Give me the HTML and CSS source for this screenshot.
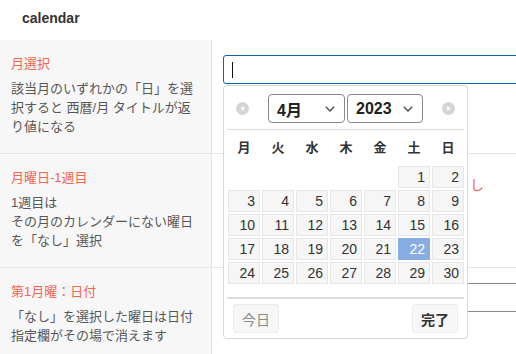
FILE: index.html
```html
<!DOCTYPE html>
<html lang="ja">
<head>
    <meta charset="UTF-8">
    <title>calendar</title>
    <link rel="stylesheet" href="styles.css">
</head>
<body>
    <div class="page-head">calendar</div>

    <div class="form-rows">
        <div class="form-row">
            <div class="row-label">
                <div class="label-title">月選択</div>
                <p class="label-desc">該当月のいずれかの「日」を選<br>択すると 西暦/月 タイトルが返<br>り値になる</p>
            </div>
            <div class="row-field">
                <div class="date-box">
                    <div class="date-input is-focused"><span class="caret"></span></div>

                    <div class="picker">
                        <div class="picker-head">
                            <svg class="nav-btn" width="13" height="13" viewBox="0 0 13 13">
                                <circle cx="6.5" cy="6.5" r="6.5" fill="#d5d5d5"/>
                                <polygon points="7.8,3.8 4.6,6.5 7.8,9.2" fill="#fff"/>
                            </svg>
                            <div class="picker-selects">
                                <div class="fake-select month-select">
                                    <span>4月</span>
                                    <svg width="10" height="6" viewBox="0 0 10 6"><polyline points="0.8,0.8 5,5 9.2,0.8" fill="none" stroke="#444" stroke-width="1.3"/></svg>
                                </div>
                                <div class="fake-select year-select">
                                    <span>2023</span>
                                    <svg width="10" height="6" viewBox="0 0 10 6"><polyline points="0.8,0.8 5,5 9.2,0.8" fill="none" stroke="#444" stroke-width="1.3"/></svg>
                                </div>
                            </div>
                            <svg class="nav-btn" width="13" height="13" viewBox="0 0 13 13">
                                <circle cx="6.5" cy="6.5" r="6.5" fill="#d5d5d5"/>
                                <polygon points="5.2,3.8 8.4,6.5 5.2,9.2" fill="#fff"/>
                            </svg>
                        </div>

                        <div class="week-row">
                            <span>月</span><span>火</span><span>水</span><span>木</span><span>金</span><span>土</span><span>日</span>
                        </div>

                        <div class="day-grid">
                            <span class="day-empty"></span><span class="day-empty"></span><span class="day-empty"></span><span class="day-empty"></span><span class="day-empty"></span>
                            <span class="day">1</span><span class="day">2</span>
                            <span class="day">3</span><span class="day">4</span><span class="day">5</span><span class="day">6</span><span class="day">7</span><span class="day">8</span><span class="day">9</span>
                            <span class="day">10</span><span class="day">11</span><span class="day">12</span><span class="day">13</span><span class="day">14</span><span class="day">15</span><span class="day">16</span>
                            <span class="day">17</span><span class="day">18</span><span class="day">19</span><span class="day">20</span><span class="day">21</span><span class="day is-selected">22</span><span class="day">23</span>
                            <span class="day">24</span><span class="day">25</span><span class="day">26</span><span class="day">27</span><span class="day">28</span><span class="day">29</span><span class="day">30</span>
                        </div>

                        <div class="picker-foot">
                            <button class="foot-btn today-btn">今日</button>
                            <button class="foot-btn done-btn">完了</button>
                        </div>
                    </div>
                </div>
            </div>
        </div>

        <div class="form-row">
            <div class="row-label">
                <div class="label-title">月曜日-1週目</div>
                <p class="label-desc">1週目は<br>その月のカレンダーにない曜日<br>を「なし」選択</p>
            </div>
            <div class="row-field">
                <div class="none-line">し</div>
            </div>
        </div>

        <div class="form-row">
            <div class="row-label">
                <div class="label-title">第1月曜：日付</div>
                <p class="label-desc">「なし」を選択した曜日は日付<br>指定欄がその場で消えます</p>
            </div>
            <div class="row-field">
                <div class="date-box">
                    <div class="date-input"></div>
                </div>
            </div>
        </div>
    </div>
</body>
</html>
```

FILE: styles.css
```css
:root {
    --label-bg: #f7f7f8;
    --line: #e5e5e5;
    --accent: #f2664f;
    --text-main: #333333;
    --text-sub: #575757;
    --focus: #1363a7;
}
* {
    margin: 0;
    padding: 0;
    box-sizing: border-box;
}
html, body {
    overflow: hidden;
}
body {
    font-family: "Liberation Sans", "Noto Sans CJK JP", sans-serif;
    color: var(--text-main);
    background-color: #fff;
}
.page-head {
    height: 40px;
    padding: 8px 22px 0;
    font-size: 14px;
    line-height: 20px;
    font-weight: 700;
}
.form-row {
    display: grid;
    grid-template-columns: 212px 1fr;
    border-bottom: 1px solid var(--line);
}
.row-label {
    background-color: var(--label-bg);
    border-right: 1px solid var(--line);
    padding: 14px 11px 17px;
}
.label-title {
    color: var(--accent);
    font-size: 13px;
    line-height: 20px;
    margin-bottom: 5px;
}
.label-desc {
    color: var(--text-sub);
    font-size: 13px;
    line-height: 19px;
}
.row-field {
    padding: 15px 0 0 11px;
}
.date-box {
    position: relative;
    width: calc(100% + 16px);
}
.date-input {
    height: 29px;
    display: flex;
    align-items: center;
    padding-left: 8px;
    background-color: #fff;
    border: 1px solid #8a8a8a;
    border-radius: 3px;
}
.date-input.is-focused {
    border-color: var(--focus);
}
.caret {
    width: 1px;
    height: 16px;
    background-color: #111;
}
.none-line {
    height: 29px;
    display: flex;
    align-items: center;
    padding-left: 247px;
    color: var(--accent);
    font-size: 14px;
}

/* date picker popup */
.picker {
    position: absolute;
    top: calc(100% + 1px);
    left: 0;
    width: 245px;
    background-color: #fff;
    border: 1px solid #d8d8d8;
    border-radius: 4px;
    z-index: 2;
}
.picker-head {
    display: flex;
    justify-content: space-between;
    align-items: center;
    margin: 0 3px;
    padding: 8px 9px 6px;
    border-bottom: 1px solid #dddddd;
}
.nav-btn {
    display: block;
}
.picker-selects {
    display: flex;
    gap: 2px;
}
.fake-select {
    display: flex;
    justify-content: space-between;
    align-items: center;
    height: 29px;
    padding: 0 9px 0 8px;
    border: 1px solid #8a8a8a;
    border-radius: 4px;
    font-size: 16px;
    font-weight: 700;
    color: #222;
}
.month-select {
    width: 77px;
}
.year-select {
    width: 76px;
}
.week-row {
    display: grid;
    grid-template-columns: repeat(7, 32px);
    column-gap: 2px;
    align-items: center;
    height: 32px;
    padding: 0 4px;
    text-align: center;
    font-size: 13px;
    font-weight: 700;
    color: #333;
}
.day-grid {
    display: grid;
    grid-template-columns: repeat(7, 32px);
    grid-auto-rows: 22px;
    gap: 2px;
    padding: 4px 4px 0;
}
.day {
    background-color: #f6f6f6;
    border: 1px solid #e6e6e6;
    padding-right: 4px;
    text-align: right;
    font-size: 14px;
    line-height: 20px;
    color: #333;
}
.day.is-selected {
    background-color: #88ade3;
    border-color: #88ade3;
    color: #fff;
}
.picker-foot {
    display: flex;
    justify-content: space-between;
    margin: 13px 3px 0;
    padding: 5px 6px;
    border-top: 2px solid #dddddd;
}
.foot-btn {
    width: 46px;
    height: 29px;
    background-color: #f7f7f7;
    border: 1px solid #ebebeb;
    border-radius: 3px;
    font-family: inherit;
    font-size: 14px;
    color: #8a8a8a;
}
.done-btn {
    font-weight: 700;
    color: #333;
}
```
